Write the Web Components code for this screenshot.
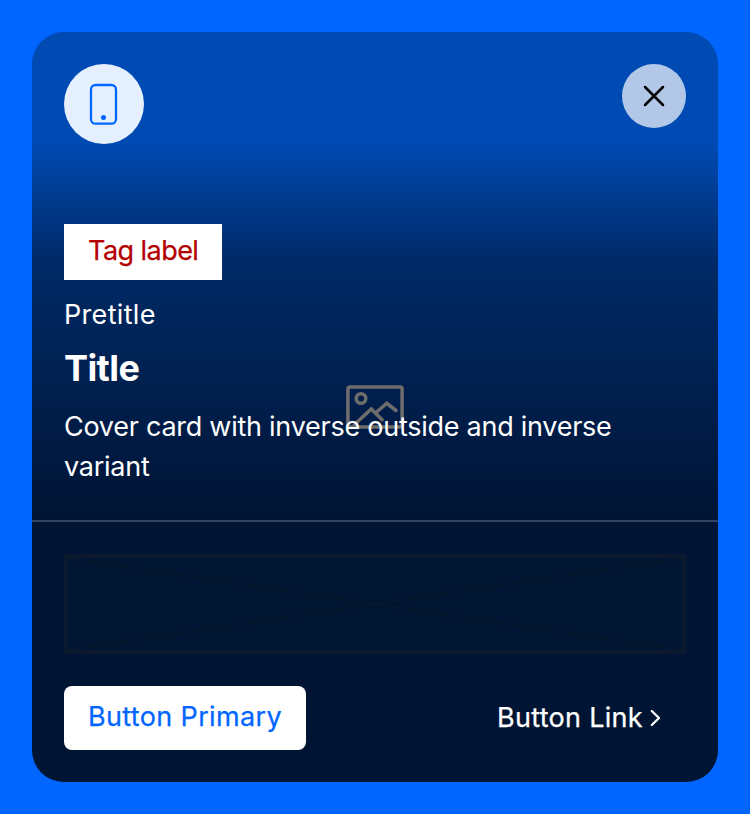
<!DOCTYPE html>
<html lang="en"><head><meta charset="utf-8"><title>Cover card</title>
<style>
body{margin:0;padding:32px;background:#0066ff;font-family:Inter,"Liberation Sans",sans-serif;font-size:27px;color:#fff}
</style></head><body>
<cover-card>
 <icon-asset slot="asset"></icon-asset>
 <close-button slot="close"></close-button>
 <tag-label slot="text">Tag label</tag-label>
 <card-text slot="text" kind="pretitle">Pretitle</card-text>
 <card-text slot="text" kind="title">Title</card-text>
 <card-text slot="text" kind="description">Cover card with inverse outside and inverse variant</card-text>
 <placeholder-box slot="extra"></placeholder-box>
 <action-button slot="actions">Button Primary</action-button>
 <action-link slot="actions">Button Link</action-link>
</cover-card>
<script>
const define=(name,html)=>customElements.define(name,class extends HTMLElement{
  constructor(){super();this.attachShadow({mode:'open'}).innerHTML=html;}
});
define('cover-card',`<style>
:host{display:flex;flex-direction:column;height:750px;border-radius:32px;overflow:hidden;background:#004ab3;box-sizing:border-box}
.top{display:flex;justify-content:space-between;align-items:flex-start;height:80px;padding:32px 32px 0}
.text{position:relative;height:376px;box-sizing:border-box;padding:80px 32px 0;background:linear-gradient(180deg,#004ab3 0%,#002a67 31%,#001434 100%)}
.image{position:absolute;left:314px;top:241px;width:58px;height:44px}
.content{position:relative}
.footer{flex:1;border-top:2px solid #334360;background:#001433;padding:32px;display:flex;flex-direction:column;gap:32px}
.actions{display:flex;justify-content:space-between}
</style>
<div class="top"><slot name="asset"></slot><slot name="close"></slot></div>
<div class="text"><svg class="image" viewBox="0 0 58 44" fill="none" stroke="#6e6d6c" stroke-width="3.5" stroke-linejoin="round" stroke-linecap="round"><rect x="1.9" y="1.9" width="54.2" height="40.2" rx="2"/><circle cx="15" cy="13.5" r="4.8"/><path stroke-linejoin="miter" d="M8.5 39.5 25.3 24l10.8 10.7M29.8 27.8 40.8 18.3 50 25.5"/></svg><div class="content"><slot name="text"></slot></div></div>
<div class="footer"><slot name="extra"></slot><div class="actions"><slot name="actions"></slot></div></div>`);
define('icon-asset',`<style>:host{display:block;width:80px;height:80px;border-radius:50%;background:#e5f0ff}svg{display:block}</style>
<svg width="80" height="80" viewBox="0 0 80 80"><rect x="27" y="21" width="25" height="38.7" rx="4.5" fill="none" stroke="#0066ff" stroke-width="2.3"/><circle cx="39.5" cy="53.5" r="2.5" fill="#0066ff"/></svg>`);
define('close-button',`<style>:host{display:block;width:64px;height:64px;border-radius:50%;background:#b3c8e8}svg{display:block}</style>
<svg width="64" height="64" viewBox="0 0 64 64" fill="none" stroke="#000" stroke-width="2.5" stroke-linecap="round"><path d="m23 23 18 18M41 23 23 41"/></svg>`);
define('tag-label',`<style>:host{display:block;width:158px;box-sizing:border-box;height:56px;padding:0 24px;background:#fff;color:#b30000;line-height:54px;white-space:nowrap;letter-spacing:-.55px;-webkit-text-stroke:.25px}</style><slot></slot>`);
define('card-text',`<style>:host{display:block}
:host([kind=pretitle]){margin-top:15px;line-height:40px;letter-spacing:.32px}
:host([kind=title]){margin-top:9px;line-height:48px;font-size:36px;font-weight:700;letter-spacing:-.6px}
:host([kind=description]){margin-top:15px;line-height:40px;letter-spacing:-.26px}
</style><slot></slot>`);
define('placeholder-box',`<style>:host{display:block;height:100px}svg{display:block}</style>
<svg width="622" height="100" viewBox="0 0 622 100"><rect x="2" y="2" width="618" height="96" fill="#001633" stroke="#0b1a2e" stroke-width="4"/><path d="M4 4 618 96M4 96 618 4" stroke="#061730" stroke-width="3"/></svg>`);
define('action-button',`<style>:host{display:block;width:242px;box-sizing:border-box;height:64px;border-radius:8px;background:#fff;color:#0066ff;line-height:62px;padding:0 24px;white-space:nowrap;letter-spacing:.35px;-webkit-text-stroke:.25px}</style><slot></slot>`);
define('action-link',`<style>:host{display:flex;align-items:center;width:190px;box-sizing:border-box;height:64px;padding-left:1px;padding-bottom:2px;white-space:nowrap;letter-spacing:.3px;-webkit-text-stroke:.25px}svg{margin:2px 0 0 7px}</style><slot></slot><svg width="11" height="18" viewBox="0 0 11 18" fill="none" stroke="#fff" stroke-width="2.3" stroke-linecap="round" stroke-linejoin="round"><path d="m1.8 2 7.2 7-7.2 7"/></svg>`);
</script></body></html>
